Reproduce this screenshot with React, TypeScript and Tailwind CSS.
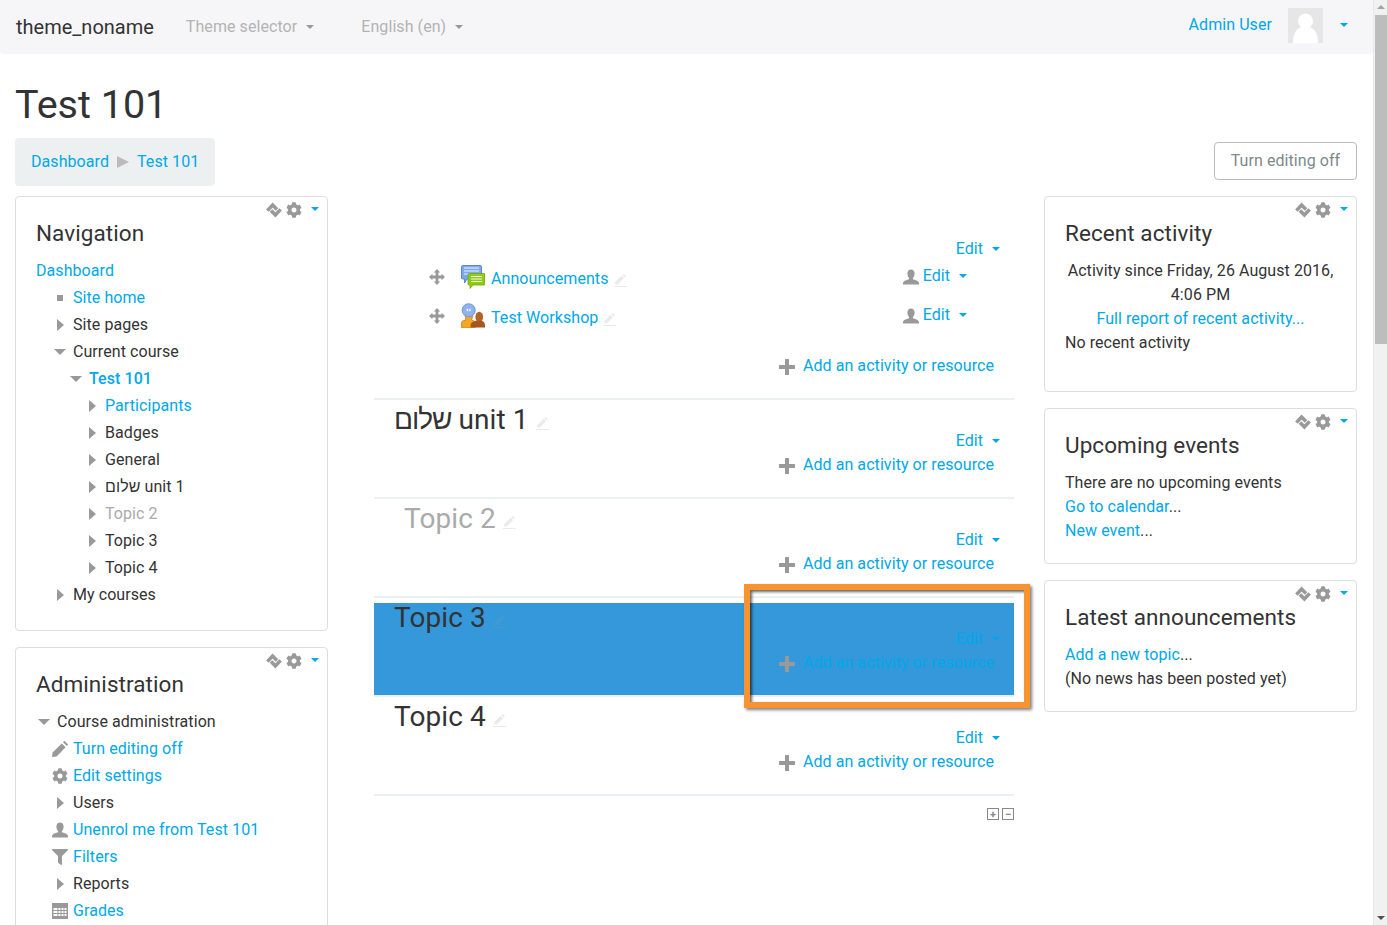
import React from 'react';
import { FaCog, FaFilter } from 'react-icons/fa';

const Caret = ({ muted }: { muted?: boolean }) => (
  <span
    className={`inline-block w-0 h-0 border-x-4 border-t-4 border-x-transparent ${
      muted ? 'border-t-[#999]' : 'border-t-[#00a8e8]'
    }`}
  />
);

const TriRight = () => (
  <span className="inline-block w-0 h-0 border-y-[6px] border-l-[7px] border-y-transparent border-l-[#999]" />
);
const TriDown = () => (
  <span className="inline-block w-0 h-0 border-x-[6px] border-t-[6px] border-x-transparent border-t-[#999]" />
);

const MoveBlockIcon = () => (
  <svg width="16" height="16" viewBox="0 0 16 16" fill="none" stroke="#999" strokeWidth="3.6">
    <path d="M1.4 8.6 L6.6 3 L11 7.4" />
    <path d="M5 8.6 L9.4 13 L14.6 7.4" />
  </svg>
);

const UserIcon = () => (
  <svg width="16" height="16" viewBox="0 0 16 16" fill="#999" className="shrink-0">
    <path d="M8 0.5 C10.4 0.5 11.6 2.4 11.6 4.6 C11.6 6.6 10.8 8.4 9.9 9.2 V10.2 C12 11 15.8 11.8 16 14 V15.5 H0 V14 C0.2 11.8 4 11 6.1 10.2 V9.2 C5.2 8.4 4.4 6.6 4.4 4.6 C4.4 2.4 5.6 0.5 8 0.5 Z" />
  </svg>
);

const PencilIcon = () => (
  <svg width="16" height="16" viewBox="0 0 16 16" fill="#999">
    <path d="M0 16 L0.6 11.4 L9.8 2.4 L13.6 6.2 L4.6 15.4 Z" />
    <path d="M11 1.2 L12 0.2 Q12.4 0 12.8 0.2 L15.8 3.2 Q16 3.6 15.8 4 L14.8 5 Z" />
  </svg>
);

const PlusIcon = () => (
  <svg width="16" height="16" viewBox="0 0 16 16" fill="#999" className="shrink-0">
    <rect x="6" y="0" width="4" height="16" rx="0.5" />
    <rect x="0" y="6" width="16" height="4" rx="0.5" />
  </svg>
);

const MoveIcon = () => (
  <svg width="16" height="16" viewBox="0 0 16 16" fill="#999" className="shrink-0">
    <path d="M8 0 L11.2 3.4 H9.4 V6.6 H12.6 V4.8 L16 8 L12.6 11.2 V9.4 H9.4 V12.6 H11.2 L8 16 L4.8 12.6 H6.6 V9.4 H3.4 V11.2 L0 8 L3.4 4.8 V6.6 H6.6 V3.4 H4.8 Z" />
  </svg>
);

const BlockControls = () => (
  <div className="absolute top-[5px] right-[8px] flex items-center">
    <MoveBlockIcon />
    <FaCog size={16} className="text-[#999] ml-[4px]" />
    <span className="ml-[9px] mb-[2px] flex"><Caret /></span>
  </div>
);

const Block = ({
  title,
  className,
  children,
}: {
  title: string;
  className?: string;
  children: React.ReactNode;
}) => (
  <section className={`relative border border-[#ddd] rounded-[4px] bg-white px-[20px] pt-[19px] ${className ?? ''}`}>
    <BlockControls />
    <h2 className="text-[22.5px] leading-[33px] text-[#333] mt-px mb-[8px]">{title}</h2>
    {children}
  </section>
);

type TreeItem = {
  label: string;
  indent: string;
  icon?: React.ReactNode;
  link?: boolean;
  bold?: boolean;
  muted?: boolean;
};

const square = <span className="inline-block w-[6px] h-[6px] bg-[#999]" />;

const navItems: TreeItem[] = [
  { label: 'Site home', indent: 'pl-[16px]', icon: square, link: true },
  { label: 'Site pages', indent: 'pl-[16px]', icon: <TriRight /> },
  { label: 'Current course', indent: 'pl-[16px]', icon: <TriDown /> },
  { label: 'Test 101', indent: 'pl-[32px]', icon: <TriDown />, link: true, bold: true },
  { label: 'Participants', indent: 'pl-[48px]', icon: <TriRight />, link: true },
  { label: 'Badges', indent: 'pl-[48px]', icon: <TriRight /> },
  { label: 'General', indent: 'pl-[48px]', icon: <TriRight /> },
  { label: 'שלום unit 1', indent: 'pl-[48px]', icon: <TriRight /> },
  { label: 'Topic 2', indent: 'pl-[48px]', icon: <TriRight />, muted: true },
  { label: 'Topic 3', indent: 'pl-[48px]', icon: <TriRight /> },
  { label: 'Topic 4', indent: 'pl-[48px]', icon: <TriRight /> },
  { label: 'My courses', indent: 'pl-[16px]', icon: <TriRight /> },
];

const GradesIcon = () => (
  <svg width="16" height="16" viewBox="0 0 16 16">
    <rect width="16" height="16" fill="#999" />
    <g fill="#fff">
      <rect x="1.5" y="5" width="4" height="2" />
      <rect x="6.5" y="5" width="2" height="2" />
      <rect x="9.5" y="5" width="2" height="2" />
      <rect x="12.5" y="5" width="2" height="2" />
      <rect x="1.5" y="8" width="4" height="2" />
      <rect x="6.5" y="8" width="2" height="2" />
      <rect x="9.5" y="8" width="2" height="2" />
      <rect x="12.5" y="8" width="2" height="2" />
      <rect x="1.5" y="11" width="4" height="2" />
      <rect x="6.5" y="11" width="2" height="2" />
      <rect x="9.5" y="11" width="2" height="2" />
      <rect x="12.5" y="11" width="2" height="2" />
    </g>
  </svg>
);

const adminItems: TreeItem[] = [
  { label: 'Course administration', indent: 'pl-0', icon: <TriDown /> },
  { label: 'Turn editing off', indent: 'pl-[16px]', icon: <PencilIcon />, link: true },
  { label: 'Edit settings', indent: 'pl-[16px]', icon: <FaCog size={16} className="text-[#999]" />, link: true },
  { label: 'Users', indent: 'pl-[16px]', icon: <TriRight /> },
  { label: 'Unenrol me from Test 101', indent: 'pl-[16px]', icon: <UserIcon />, link: true },
  { label: 'Filters', indent: 'pl-[16px]', icon: <FaFilter size={16} className="text-[#999]" />, link: true },
  { label: 'Reports', indent: 'pl-[16px]', icon: <TriRight /> },
  { label: 'Grades', indent: 'pl-[16px]', icon: <GradesIcon />, link: true },
];

const TreeRow = ({ item }: { item: TreeItem }) => (
  <div className={`flex items-center h-[27px] ${item.indent}`}>
    <span className="w-[16px] mr-[5px] flex justify-center items-center shrink-0">{item.icon}</span>
    <span
      className={`${item.link ? 'text-[#00a8e8]' : item.muted ? 'text-[#aaa]' : 'text-[#333]'} ${
        item.bold ? 'font-medium' : ''
      }`}
    >
      {item.label}
    </span>
  </div>
);

const FaintPencil = ({ className }: { className?: string }) => (
  <svg width="13" height="13" viewBox="0 0 13 13" fill="#999" className={`opacity-20 ${className ?? ''}`}>
    <path d="M1 10 L1.4 8 L7.6 1.8 L10 4.2 L3.6 10.4 Z M8.4 1 L9.2 0.2 Q9.6 0 10 0.2 L11.6 1.8 Q11.8 2.2 11.6 2.6 L10.8 3.4 Z" />
    <rect x="0" y="12" width="13" height="1" />
  </svg>
);

const EditMenu = ({ className }: { className?: string }) => (
  <span className={`inline-flex items-center text-[#00a8e8] ${className ?? ''}`}>
    Edit
    <span className="ml-[9px] flex"><Caret /></span>
  </span>
);

const AddActivity = () => (
  <div className="flex justify-end items-center h-[24px] pr-[20px]">
    <span className="mr-[8px] mt-[2px] flex"><PlusIcon /></span>
    <span className="text-[#00a8e8]">Add an activity or resource</span>
  </div>
);

const AnnouncementsIcon = () => (
  <svg width="24" height="24" viewBox="0 0 24 24">
    <path d="M0.5 2 Q0.5 0.5 2 0.5 H19 Q20.5 0.5 20.5 2 V13 Q20.5 14 19 14 H6 L3.5 18 V14 H2 Q0.5 14 0.5 13 Z" fill="#7fa8ee" stroke="#5b86d8" />
    <path d="M3 3 H18 M3 6 H18 M3 9 H10" stroke="#eaf1ff" strokeWidth="1.2" />
    <path d="M7 9.5 Q7 8.5 8 8.5 H23 Q24 8.5 24 9.5 V19 Q24 20 23 20 H12 L9 23.5 V20 H8 Q7 20 7 19 Z" fill="#8fcb14" stroke="#6fa50c" strokeWidth="0.8" />
    <path d="M10 11.5 H21 M10 14 H21 M10 16.5 H21" stroke="#f4ffd8" strokeWidth="1.2" />
  </svg>
);

const WorkshopIcon = () => (
  <svg width="25" height="26" viewBox="0 0 25 26">
    <path d="M0 25 V21 Q0 18 5 17 Q4 13 5 9 H12 Q13 14 11 17 Q15 18 15 21 V25 Z" fill="#f5a623" stroke="#c67c10" strokeWidth="0.7" />
    <ellipse cx="19" cy="14" rx="4" ry="5.5" fill="#b5622a" />
    <path d="M10 25 V22 Q10 19.5 15.5 18 H22 Q25 19.5 25 22 V25 Z" fill="#a8561f" />
    <circle cx="8" cy="7" r="6.8" fill="#8fb2f0" stroke="#6d92dc" />
    <rect x="6" y="5.5" width="1.4" height="2.5" fill="#fff" />
    <rect x="8.6" y="5.5" width="1.4" height="2.5" fill="#fff" />
  </svg>
);

const ActivityRow = ({ icon, name }: { icon: React.ReactNode; name: string }) => (
  <div className="flex items-center h-[39px] pl-[55px] pr-[47px]">
    <span className="flex -mt-[3px]"><MoveIcon /></span>
    <span className="ml-[16px] w-[24px] flex justify-center -mt-[4px]">{icon}</span>
    <span className="ml-[6px] text-[#00a8e8]">{name}</span>
    <FaintPencil className="ml-[5px] mt-[3px]" />
    <span className="ml-auto flex items-center -mt-[6px]">
      <span className="mr-[4px] mt-[3px] flex"><UserIcon /></span>
      <EditMenu />
    </span>
  </div>
);

const TopicSection = ({
  title,
  dimmed,
  highlight,
}: {
  title: React.ReactNode;
  dimmed?: boolean;
  highlight?: boolean;
}) => (
  <div className="border-b-2 border-[#ecf0f1] pt-[5px] h-[99px]">
    <div className={`h-[92px] ${highlight ? 'bg-[#3498db]' : ''}`}>
      <h3
        className={`flex items-center h-[30px] -mb-[6px] text-[28px] ${
          dimmed ? 'pl-[30px] text-[#aaa]' : 'pl-[20px] text-[#333]'
        }`}
      >
        <span>{title}</span>
        <FaintPencil className="ml-[7px] mt-[6px]" />
      </h3>
      <div className="flex justify-end items-center h-[24px] pr-[14px]">
        <EditMenu />
      </div>
      <AddActivity />
    </div>
  </div>
);

const Scrollbar = () => (
  <div className="relative w-[14px] shrink-0 bg-[#f1f1f1] flex flex-col items-center border-l border-[#e8e8e8]">
    <span className="mt-[5px] w-0 h-0 border-x-[4px] border-b-[4px] border-x-transparent border-b-[#a3a3a3]" />
    <div className="mt-[6px] w-[12px] h-[329px] bg-[#bdbdbd]" />
    <span className="mt-auto mb-[5px] w-0 h-0 border-x-[4px] border-t-[4px] border-x-transparent border-t-[#505050]" />
  </div>
);

export default function App() {
  return (
    <div className="flex h-[925px] overflow-hidden bg-white text-[16px] leading-[24px] tracking-[0.07px] text-[#333] [font-family:Roboto,'Liberation_Sans',sans-serif]">
      <div className="relative flex-1 min-w-0">
        <nav className="flex items-center h-[54px] pl-[16px] pr-[25px] bg-[#f6f6f8] rounded-b-[4px]">
          <span className="text-[20px] tracking-normal text-[#333]">theme_noname</span>
          <span className="ml-[32px] text-[#b3b3b3] flex items-center">
            Theme selector
            <span className="ml-[9px] flex"><Caret muted /></span>
          </span>
          <span className="ml-[47px] text-[#b3b3b3] flex items-center">
            English (en)
            <span className="ml-[9px] flex"><Caret muted /></span>
          </span>
          <span className="ml-auto text-[#00a8e8] -mt-[5px]">Admin User</span>
          <span className="ml-[16px] w-[35px] h-[35px] bg-[#e6e6e6] overflow-hidden -mt-[3px]">
            <svg width="35" height="35" viewBox="0 0 35 35" fill="#fff">
              <circle cx="17.5" cy="13" r="7.5" />
              <path d="M5 35 Q5 21 14 19 H21 Q30 21 30 35 Z" />
            </svg>
          </span>
          <span className="ml-[17px] flex -mt-[4px]"><Caret /></span>
        </nav>

        <header className="pl-[15px] pr-[16px]">
          <h1 className="pt-[25px] h-[84px] text-[39.5px] leading-[52px] tracking-normal text-[#333]">Test 101</h1>
          <div className="flex items-start justify-between">
            <div className="flex items-center h-[48px] px-[16px] bg-[#ecf0f1] rounded-[4px]">
              <span className="text-[#00a8e8]">Dashboard</span>
              <span className="mx-[8px] w-0 h-0 border-y-[6px] border-l-[12px] border-y-transparent border-l-[#bbb]" />
              <span className="text-[#00a8e8]">Test 101</span>
            </div>
            <button className="mt-[4px] w-[143px] h-[38px] border border-[#bbb] rounded-[4px] text-[#7b8a8b] bg-white">
              Turn editing off
            </button>
          </div>
        </header>

        <main className="flex items-start px-[15px] mt-[10px]">
          <aside className="w-[313px] shrink-0 flex flex-col gap-[16px]">
            <Block title="Navigation" className="h-[435px]">
              <div className="flex items-center h-[27px] -mt-[1px] text-[#00a8e8]">Dashboard</div>
              {navItems.map(item => (
                <TreeRow key={item.label} item={item} />
              ))}
            </Block>
            <Block title="Administration" className="h-[400px]">
              <div className="-mt-[1px]">
                {adminItems.map(item => (
                  <TreeRow key={item.label} item={item} />
                ))}
              </div>
            </Block>
          </aside>

          <div className="w-[640px] shrink-0 ml-[46px]">
            <div className="h-[204px] border-b-2 border-[#ecf0f1] pt-[41px]">
              <div className="flex justify-end items-center h-[24px] pr-[14px]">
                <EditMenu />
              </div>
              <div className="-mt-[2px]">
                <ActivityRow icon={<AnnouncementsIcon />} name="Announcements" />
                <ActivityRow icon={<WorkshopIcon />} name="Test Workshop" />
              </div>
              <div className="mt-[17px]">
                <AddActivity />
              </div>
            </div>
            <TopicSection title={<><span className="tracking-[-1px]">שלום</span> unit 1</>} />
            <TopicSection title="Topic 2" dimmed />
            <TopicSection title="Topic 3" highlight />
            <TopicSection title="Topic 4" />
            <div className="flex justify-end gap-[3px] mt-[12px]">
              <span className="flex items-center justify-center w-[12px] h-[12px] border border-[#888] text-[#888] text-[11px] leading-none font-bold">+</span>
              <span className="flex items-center justify-center w-[12px] h-[12px] border border-[#888] text-[#888] text-[11px] leading-none font-bold">−</span>
            </div>
          </div>

          <aside className="w-[313px] shrink-0 ml-[30px] flex flex-col gap-[16px]">
            <Block title="Recent activity" className="pb-[36px]">
              <div className="pt-px">
                <p className="text-center">Activity since Friday, 26 August 2016, 4:06 PM</p>
                <p className="text-center text-[#00a8e8]">Full report of recent activity...</p>
                <p>No recent activity</p>
              </div>
            </Block>
            <Block title="Upcoming events" className="pb-[20px]">
              <div className="pt-px">
                <p>There are no upcoming events</p>
                <p><span className="text-[#00a8e8]">Go to calendar</span>...</p>
                <p><span className="text-[#00a8e8]">New event</span>...</p>
              </div>
            </Block>
            <Block title="Latest announcements" className="pb-[20px]">
              <div className="pt-px">
                <p><span className="text-[#00a8e8]">Add a new topic</span>...</p>
                <p>(No news has been posted yet)</p>
              </div>
            </Block>
          </aside>
        </main>

        <div className="absolute left-[744px] top-[584px] w-[286px] h-[124px] border-[6px] border-[#f79431] shadow-[2px_2px_3px_rgba(0,0,0,0.5),inset_2px_2px_3px_rgba(0,0,0,0.6)]" />
      </div>
      <Scrollbar />
    </div>
  );
}
